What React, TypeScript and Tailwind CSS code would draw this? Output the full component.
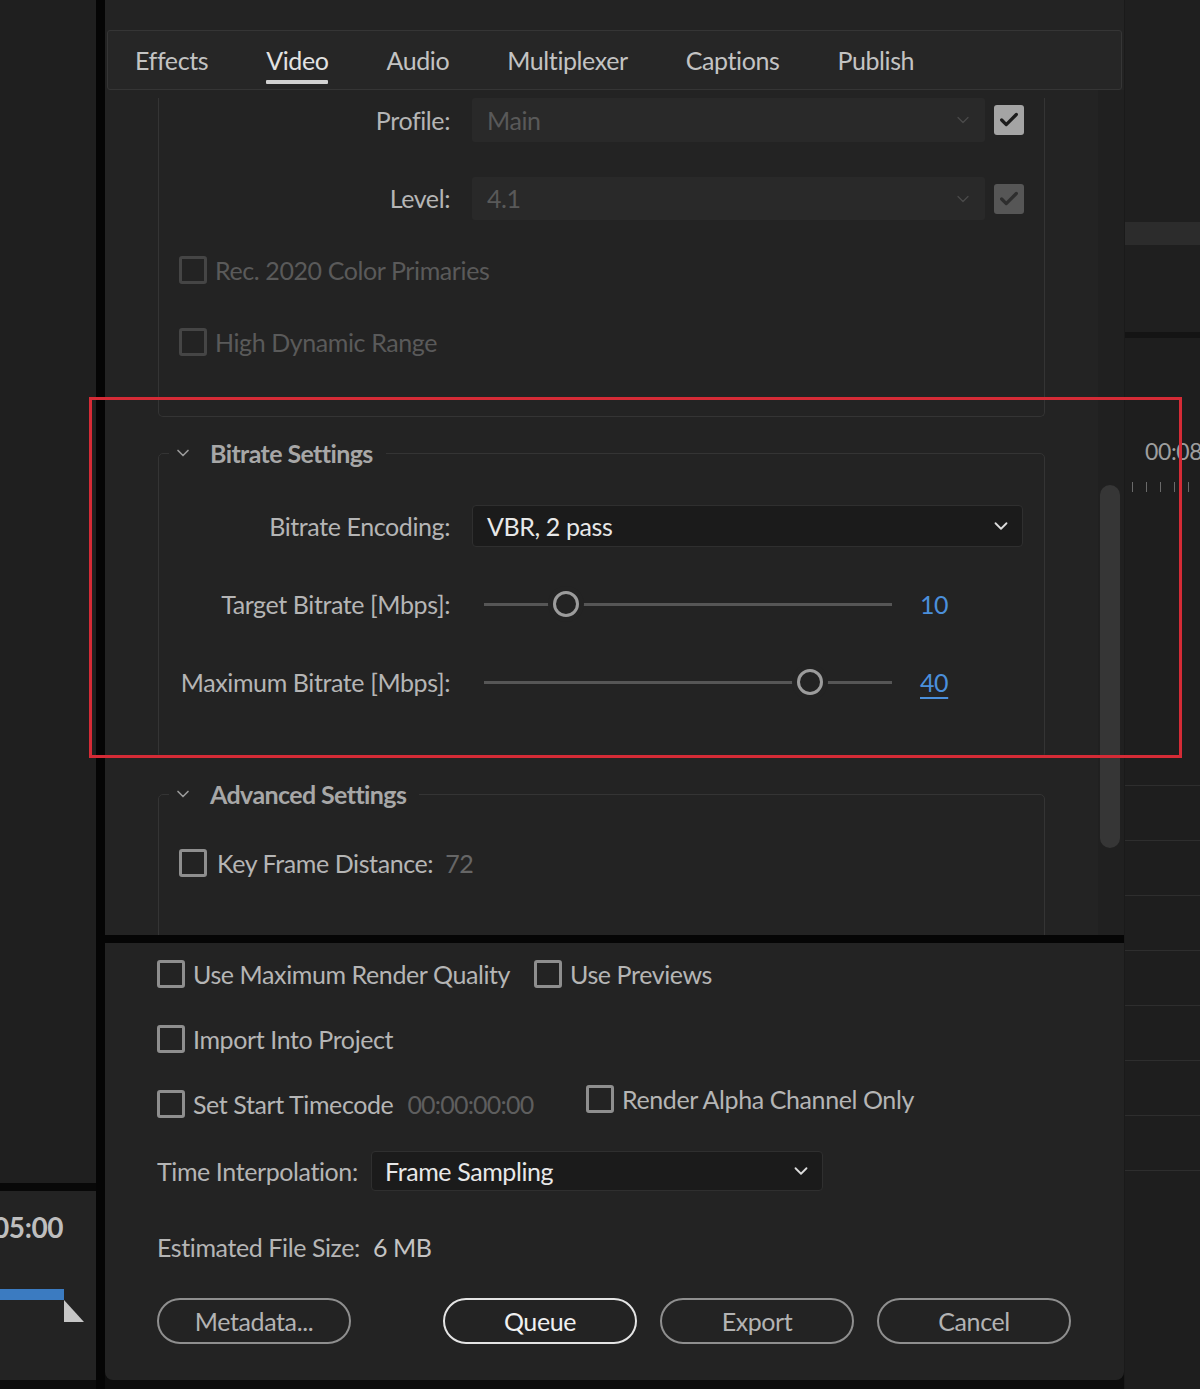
import { ChevronDown, Check } from 'lucide-react'

const tabs = ['Effects', 'Video', 'Audio', 'Multiplexer', 'Captions', 'Publish']

function Box({ checked = false, dim = false }: { checked?: boolean; dim?: boolean }) {
  if (checked) {
    return (
      <div
        className={`flex h-[30px] w-[30px] shrink-0 items-center justify-center rounded-[3px] ${
          dim ? 'bg-[#565656]' : 'bg-[#a4a4a4]'
        }`}
      >
        <Check className={`h-[22px] w-[22px] ${dim ? 'text-[#2e2e2e]' : 'text-[#1c1c1c]'}`} strokeWidth={3.5} />
      </div>
    )
  }
  return (
    <div
      className={`h-[28px] w-[28px] shrink-0 rounded-[3px] border-[3px] ${
        dim ? 'border-[#454545]' : 'border-[#8e8e8e]'
      }`}
    />
  )
}

function Slider({ value, max = 50, underline = false }: { value: number; max?: number; underline?: boolean }) {
  return (
    <div className="flex items-center">
      <div className="relative ml-[34px] h-[3px] w-[408px] bg-[#565656]">
        <div
          className="absolute top-1/2 h-[26px] w-[26px] -translate-x-1/2 -translate-y-1/2 rounded-full border-[3px] border-[#9c9c9c] bg-[#232323] shadow-[0_0_0_5px_#232323]"
          style={{ left: `${(value / max) * 100}%` }}
        />
      </div>
      <span className={`ml-[28px] text-[25px] text-[#4b8fdb] ${underline ? 'underline underline-offset-[5px] decoration-2' : ''}`}>
        {value}
      </span>
    </div>
  )
}

function Legend({ title }: { title: string }) {
  return (
    <legend className="ml-[10px] flex h-[34px] items-center pr-[13px] pl-[4px]">
      <ChevronDown className="h-[20px] w-[20px] text-[#9a9a9a]" strokeWidth={2} />
      <span className="ml-[17px] text-[25px] font-bold tracking-[-0.6px] text-[#a7a7a7]">{title}</span>
    </legend>
  )
}

export default function App() {
  return (
    <div className="relative flex h-[1389px] w-[1200px] overflow-hidden bg-[#0d0d0d] font-['Lato',sans-serif] text-[25px] leading-none text-[#b5b5b5] tracking-[-0.4px]">
      {/* left monitor strip */}
      <div className="flex w-[96px] shrink-0 flex-col">
        <div className="h-[1183px] bg-[#1f1f1f]" />
        <div className="h-[8px] bg-[#080808]" />
        <div className="flex h-[189px] flex-col overflow-hidden bg-[#232323]">
          <div className="-ml-[7px] mt-[22px] text-[28px] font-bold text-[#bebebe]">05:00</div>
          <div className="mt-[48px] h-[11px] w-[64px] bg-[#3b7bc1]" />
          <svg className="ml-[64px]" width="20" height="22" viewBox="0 0 20 22">
            <polygon points="0,0 0,22 20,22" fill="#c6c6c6" />
          </svg>
        </div>
      </div>

      <div className="w-[9px] shrink-0 bg-[#050505]" />

      {/* export dialog */}
      <div className="flex w-[1019px] shrink-0 flex-col">
        <div className="h-[30px] bg-[#232323]" />
        <div className="bg-[#232323] px-[2px]">
          <div className="flex h-[60px] items-center gap-[58px] rounded-[3px] border border-[#353535] bg-[#262626] pl-[27px]">
            {tabs.map((t) => (
              <div key={t} className="relative flex h-full items-center">
                <span className={t === 'Video' ? 'text-[#e2e2e2]' : 'text-[#c3c3c3]'}>{t}</span>
                {t === 'Video' && <div className="absolute bottom-[5px] left-0 h-[4px] w-full rounded-[1px] bg-[#d2d2d2]" />}
              </div>
            ))}
          </div>
        </div>

        {/* scrolling settings */}
        <div className="flex h-[845px] overflow-hidden bg-[#232323]">
          <div className="w-[993px] pl-[53px]">
            <div className="h-[319px] w-[887px] rounded-b-[5px] border-x border-b border-[#343434]">
              <div className="mt-[8px] flex h-[44px] items-center">
                <span className="w-[291px] text-right">Profile:</span>
                <div className="ml-[22px] flex h-[44px] w-[513px] items-center justify-between rounded-[3px] bg-[#292929] pl-[15px] pr-[12px] text-[#595959]">
                  Main
                  <ChevronDown className="h-[20px] w-[20px] text-[#4a4a4a]" strokeWidth={1.5} />
                </div>
                <div className="ml-[9px]">
                  <Box checked />
                </div>
              </div>
              <div className="mt-[35px] flex h-[43px] items-center">
                <span className="w-[291px] text-right">Level:</span>
                <div className="ml-[22px] flex h-[43px] w-[513px] items-center justify-between rounded-[3px] bg-[#292929] pl-[15px] pr-[12px] text-[#595959]">
                  4.1
                  <ChevronDown className="h-[20px] w-[20px] text-[#4a4a4a]" strokeWidth={1.5} />
                </div>
                <div className="ml-[9px]">
                  <Box checked dim />
                </div>
              </div>
              <div className="ml-[20px] mt-[32px] flex h-[36px] items-center gap-[8px] text-[#5a5a5a]">
                <Box dim />
                Rec. 2020 Color Primaries
              </div>
              <div className="ml-[20px] mt-[36px] flex h-[36px] items-center gap-[8px] text-[#5a5a5a]">
                <Box dim />
                High Dynamic Range
              </div>
            </div>

            <fieldset className="mt-[19px] w-[887px] rounded-[5px] border border-[#343434] pb-[54px]">
              <Legend title="Bitrate Settings" />
              <div className="mt-[35px] flex h-[42px] items-center">
                <span className="w-[291px] text-right">Bitrate Encoding:</span>
                <div className="ml-[22px] flex h-[42px] w-[551px] items-center justify-between rounded-[4px] border border-[#2f2f2f] bg-[#1b1b1b] pl-[14px] pr-[10px] text-[#e8e8e8]">
                  VBR, 2 pass
                  <ChevronDown className="h-[22px] w-[22px] text-[#dcdcdc]" strokeWidth={2} />
                </div>
              </div>
              <div className="mt-[36px] flex h-[42px] items-center">
                <span className="w-[291px] text-right">Target Bitrate [Mbps]:</span>
                <Slider value={10} />
              </div>
              <div className="mt-[36px] flex h-[42px] items-center">
                <span className="w-[291px] text-right">Maximum Bitrate [Mbps]:</span>
                <Slider value={40} underline />
              </div>
            </fieldset>

            <fieldset className="mt-[19px] h-[220px] w-[887px] rounded-[5px] border border-[#343434]">
              <Legend title="Advanced Settings" />
              <div className="ml-[20px] mt-[37px] flex h-[30px] items-center">
                <Box />
                <span className="ml-[10px]">Key Frame Distance:</span>
                <span className="ml-[12px] text-[#666666]">72</span>
              </div>
            </fieldset>
          </div>
          <div className="w-[26px] bg-[#202020] pl-[2px] pt-[395px]">
            <div className="h-[363px] w-[20px] rounded-full bg-[#363636]" />
          </div>
        </div>

        <div className="h-[8px] bg-[#050505]" />

        {/* output options */}
        <div className="flex h-[437px] flex-col rounded-b-[8px] bg-[#232323] pl-[52px] pt-[15px]">
          <div className="flex h-[32px] items-center">
            <div className="flex w-[377px] items-center gap-[8px]">
              <Box />
              Use Maximum Render Quality
            </div>
            <div className="flex items-center gap-[8px]">
              <Box />
              Use Previews
            </div>
          </div>
          <div className="mt-[33px] flex h-[32px] items-center gap-[8px]">
            <Box />
            Import Into Project
          </div>
          <div className="mt-[33px] flex h-[32px] items-center">
            <div className="flex w-[429px] items-center">
              <Box />
              <span className="ml-[8px]">Set Start Timecode</span>
              <span className="ml-[14px] tracking-[-0.8px] text-[#5e5e5e]">00:00:00:00</span>
            </div>
            <div className="mb-[10px] flex items-center gap-[8px]">
              <Box />
              Render Alpha Channel Only
            </div>
          </div>
          <div className="mt-[31px] flex h-[40px] items-center">
            <span className="w-[214px]">Time Interpolation:</span>
            <div className="flex h-[40px] w-[452px] items-center justify-between rounded-[4px] border border-[#2f2f2f] bg-[#1b1b1b] pl-[13px] pr-[10px] text-[#e8e8e8]">
              Frame Sampling
              <ChevronDown className="h-[22px] w-[22px] text-[#dcdcdc]" strokeWidth={2} />
            </div>
          </div>
          <div className="mt-[40px] flex h-[32px] items-center">
            Estimated File Size:
            <span className="ml-[13px] text-[#c4c4c4]">6 MB</span>
          </div>
          <div className="mt-[35px] flex h-[46px] items-center">
            <button className="h-[46px] w-[194px] rounded-full border-2 border-[#8f8f8f] text-[#b3b3b3]">Metadata...</button>
            <button className="ml-[92px] h-[46px] w-[194px] rounded-full border-2 border-[#e4e4e4] text-[#f0f0f0]">Queue</button>
            <button className="ml-[23px] h-[46px] w-[194px] rounded-full border-2 border-[#8f8f8f] text-[#b3b3b3]">Export</button>
            <button className="ml-[23px] h-[46px] w-[194px] rounded-full border-2 border-[#8f8f8f] text-[#b3b3b3]">Cancel</button>
          </div>
        </div>
      </div>

      {/* timeline strip */}
      <div className="flex w-[76px] shrink-0 flex-col border-l border-[#1a1a1a] bg-[#1e1e1e]">
        <div className="h-[222px] bg-[#1f1f1f]" />
        <div className="h-[23px] bg-[#2c2c2c]" />
        <div className="h-[87px] bg-[#1f1f1f]" />
        <div className="h-[6px] bg-[#141414]" />
        <div className="mt-[102px] whitespace-nowrap pl-[20px] text-[23px] text-[#9e9e9e]">00:08</div>
        <div className="mt-[19px] flex h-[10px] gap-[13px] pl-[7px]">
          {[0, 1, 2, 3, 4].map((i) => (
            <div key={i} className="h-[10px] w-[1px] bg-[#6a6a6a]" />
          ))}
        </div>
        <div className="mt-[293px] flex flex-col">
          {[0, 1, 2, 3, 4, 5, 6, 7].map((i) => (
            <div key={i} className="h-[55px] border-t border-[#2e2e2e]" />
          ))}
        </div>
      </div>

      {/* annotation frame */}
      <div className="absolute left-[89px] top-[397px] h-[361px] w-[1093px] border-[3px] border-[#d52b36]" />
    </div>
  )
}
